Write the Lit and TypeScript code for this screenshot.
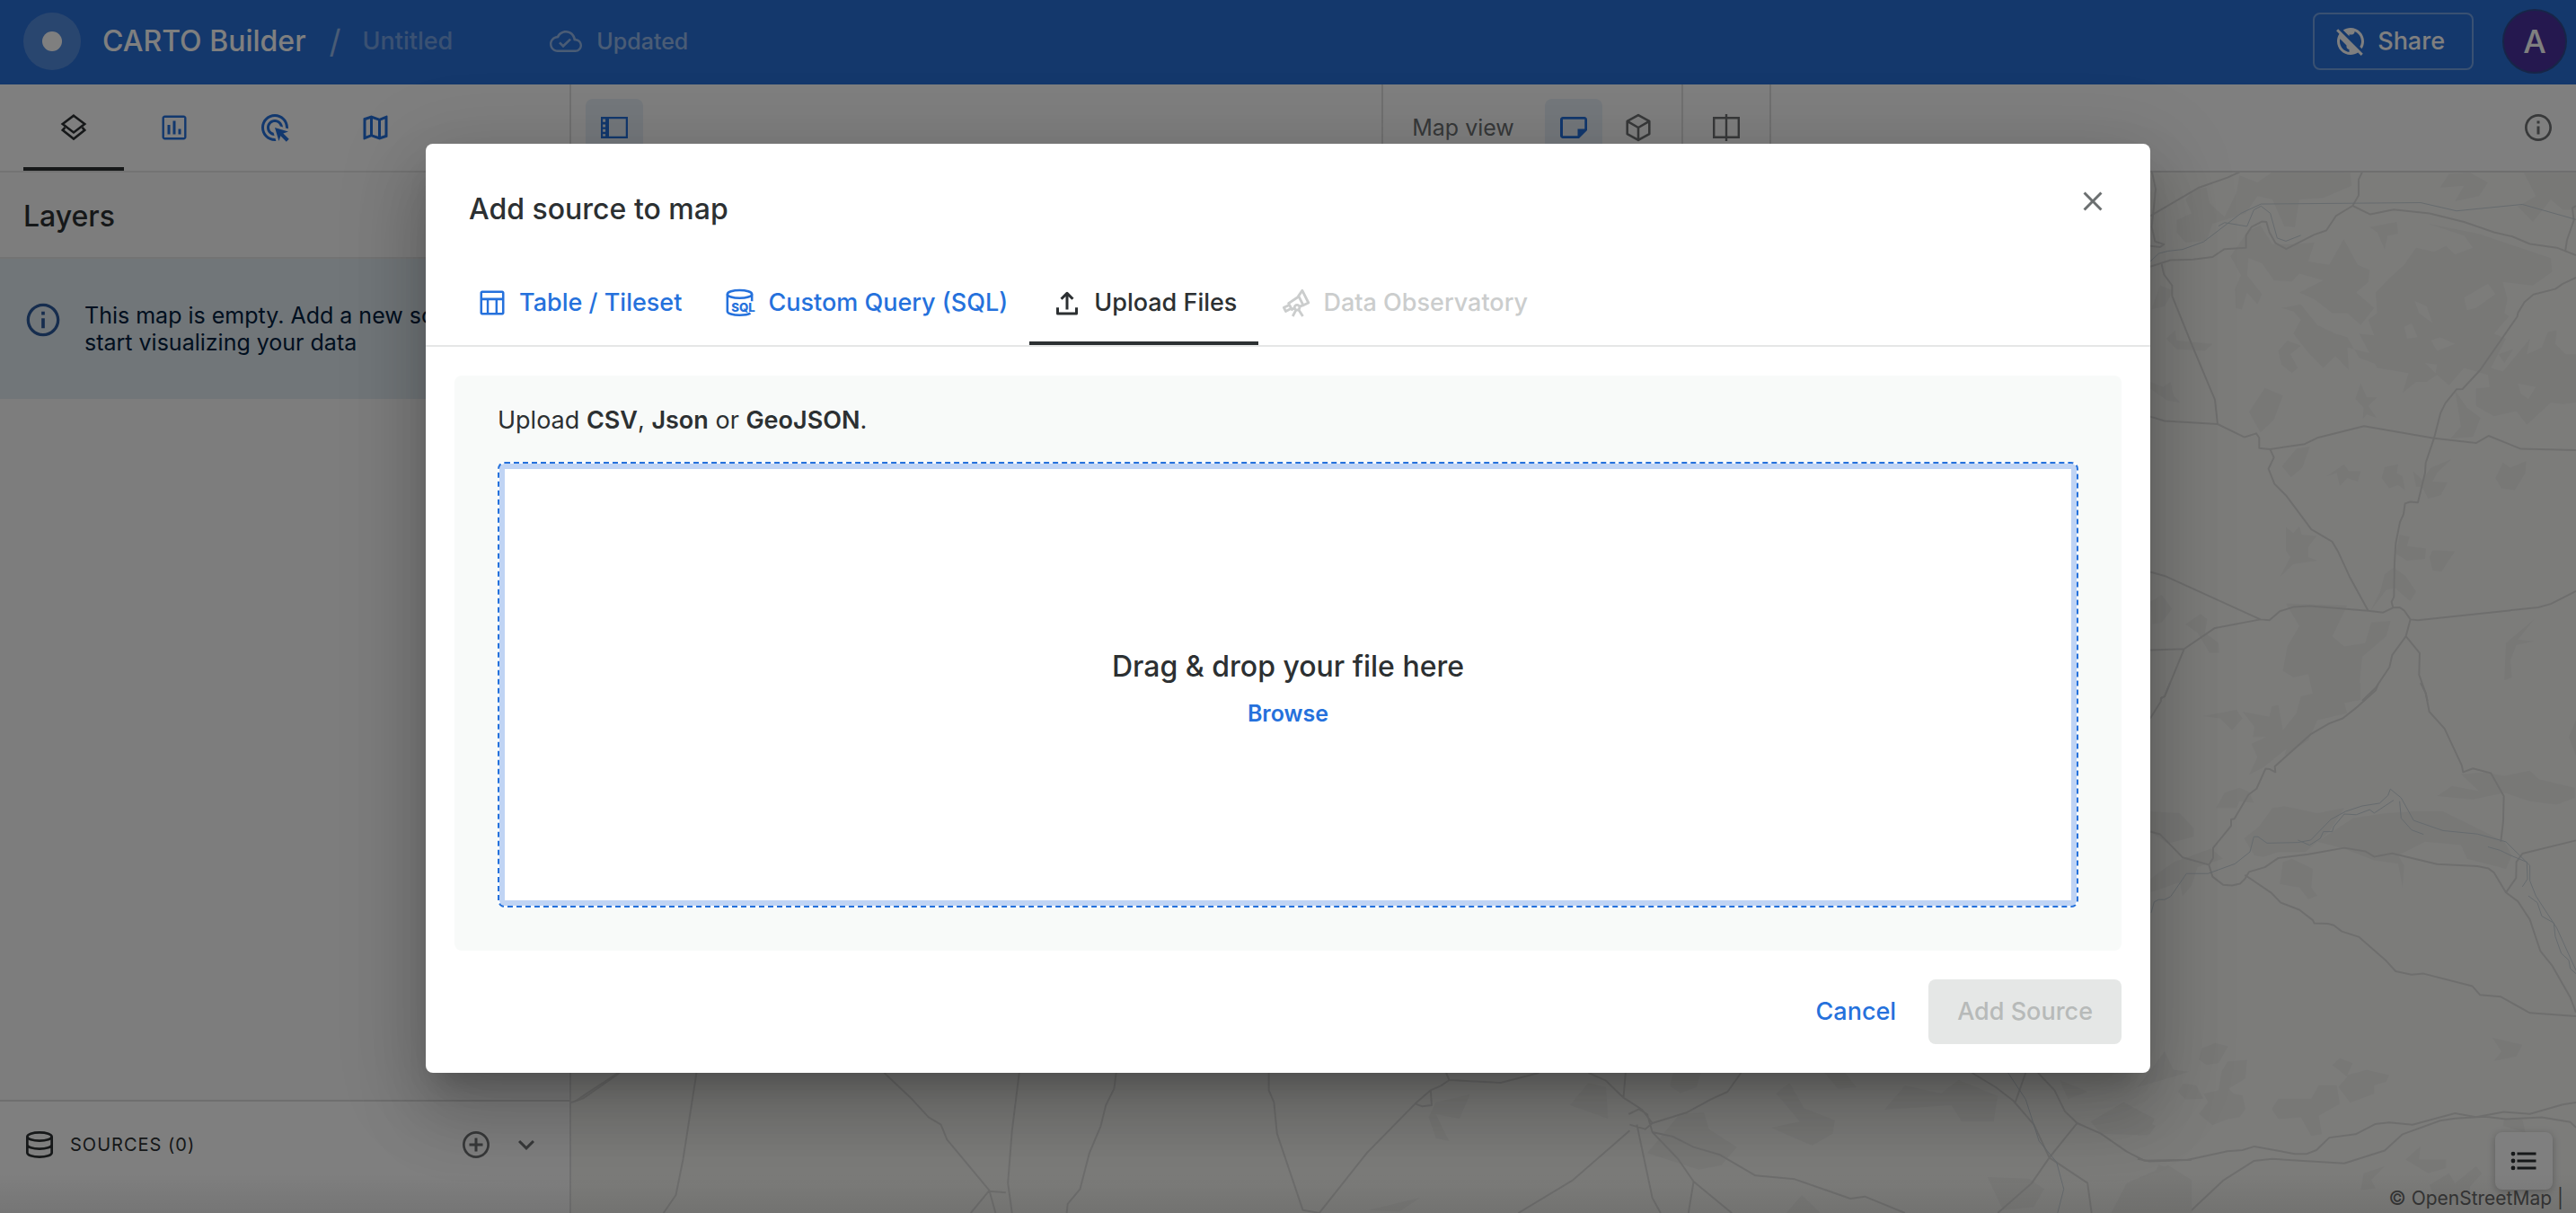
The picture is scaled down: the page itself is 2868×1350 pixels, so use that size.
import { LitElement, html, svg, css, nothing } from "lit";
import { customElement, property, state } from "lit/decorators.js";
import { classMap } from "lit/directives/class-map.js";

const icons: Record<string, unknown> = {
  layers: svg`<g fill="none" stroke="currentColor" stroke-width="1.7"><path d="M12 3.1 20.2 9.3 12 15.6 3.8 9.3Z"/><path d="M5.6 11.9 3.8 13.9 12 20.4 20.2 13.9 18.4 11.9"/></g>`,
  chart: svg`<path fill="currentColor" fill-rule="evenodd" d="M5 3h14c1.1 0 2 .9 2 2v14c0 1.1-.9 2-2 2H5c-1.1 0-2-.9-2-2V5c0-1.1.9-2 2-2zm-.4 1.6v14.8h14.8V4.600zM7 10h2v7H7zm4-3h2v10h-2zm4 6h2v4h-2z"/>`,
  target: svg`<path fill="currentColor" d="M11.71 17.99C8.530 17.84 6 15.22 6 12c0-3.310 2.690-6 6-6 3.220 0 5.840 2.530 5.990 5.710l-2.100-.630C15.480 9.310 13.890 8 12 8c-2.210 0-4 1.790-4 4 0 1.890 1.310 3.480 3.080 3.890l.630 2.100zM22 12c0 .3-.01.6-.04.9l-1.970-.590C20 12.210 20 12.100 20 12c0-4.420-3.580-8-8-8s-8 3.580-8 8 3.580 8 8 8c.1 0 .21 0 .31-.01l.590 1.970C12.600 21.990 12.300 22 12 22 6.480 22 2 17.520 2 12S6.480 2 12 2s10 4.480 10 10zm-3.770 4.260L22 15l-10-3 3 10 1.260-3.770 4.270 4.270 1.980-1.980-4.280-4.260z"/>`,
  map: svg`<path fill="currentColor" d="M20.5 3l-.16.03L15 5.1 9 3 3.360 4.900c-.21.07-.36.25-.36.48V20.500c0 .28.22.5.5.5l.16-.03L9 18.900l6 2.100 5.640-1.900c.21-.07.36-.25.36-.48V3.500c0-.28-.22-.5-.5-.5zM10 5.470l4 1.400v11.660l-4-1.400V5.470zm-5 .99l3-1.010v11.700l-3 1.160V6.460zm14 11.080l-3 1.010V6.860l3-1.160v11.840z"/>`,
  panel: svg`<path fill="currentColor" fill-rule="evenodd" d="M2 4h20v16H2zM3.400 5.600v2.200h2V5.600zm0 4v2h2v-2zm0 3.600v2h2v-2zm0 3.600v1.600h2v-1.600zM8 5.500v13h12.500v-13z"/>`,
  note: svg`<path fill="currentColor" fill-rule="evenodd" d="M4 4h16c1.100 0 2 .9 2 2v8l-6 6H4c-1.100 0-2-.9-2-2V6c0-1.100.9-2 2-2zm0 1.800v12.400h11V13h5.200V5.800z"/>`,
  cube: svg`<path fill="none" stroke="currentColor" stroke-width="1.700" stroke-linejoin="round" d="M12 2.700 20.200 7.300V16.700L12 21.300 3.800 16.700V7.300ZM3.800 7.300 12 12 20.200 7.300M12 12V21.300"/>`,
  split: svg`<path fill="none" stroke="currentColor" stroke-width="1.600" d="M2.800 4.800H21.200V19.200H2.800ZM12 2V22"/>`,
  info: svg`<path fill="currentColor" d="M11 7h2v2h-2zm0 4h2v6h-2zm1-9C6.480 2 2 6.480 2 12s4.480 10 10 10 10-4.480 10-10S17.520 2 12 2zm0 18.200c-4.500 0-8.200-3.700-8.200-8.200S7.500 3.800 12 3.800s8.200 3.700 8.200 8.200-3.700 8.200-8.200 8.200z"/>`,
  cloud: svg`<path fill="currentColor" d="M19.350 10.040C18.670 6.590 15.640 4 12 4 9.110 4 6.600 5.640 5.350 8.040 2.340 8.360 0 10.910 0 14c0 3.310 2.690 6 6 6h13c2.760 0 5-2.240 5-5 0-2.640-2.050-4.780-4.650-4.960zM19 18.400H6c-2.400 0-4.400-2-4.400-4.400 0-2.250 1.730-4.160 3.960-4.370l1.070-.11.5-.95C8.080 6.740 9.940 5.600 12 5.600c2.820 0 4.980 2.060 5.490 4.630l.3 1.300 1.430.11c1.760.1 3.180 1.600 3.180 3.360 0 1.850-1.550 3.400-3.400 3.400zm-9-4.020l-2.090-2.090-1.210 1.210L10 16.800l6.010-5.810-1.210-1.210z"/>`,
  publicOff: svg`<path fill="currentColor" d="M11 8.170L6.490 3.660C8.070 2.610 9.960 2 12 2c5.520 0 10 4.480 10 10 0 2.040-.61 3.930-1.660 5.510l-1.460-1.460C19.590 14.870 20 13.480 20 12c0-3.350-2.070-6.220-5-7.410V5c0 1.100-.9 2-2 2h-2v1.170zm10.190 13.020l-1.410 1.410-2.270-2.270C15.930 21.390 14.040 22 12 22 6.480 22 2 17.520 2 12c0-2.040.61-3.930 1.660-5.510L1.390 4.220 2.800 2.810l18.390 18.380zM11 18c-1.100 0-2-.9-2-2v-1l-4.790-4.790C4.080 10.790 4 11.380 4 12c0 4.080 3.050 7.440 7 7.930V18z"/>`,
  database: svg`<g fill="none" stroke="currentColor" stroke-width="1.800"><ellipse cx="12" cy="6" rx="9.100" ry="3.100"/><path d="M2.900 6V18C2.900 19.700 6.900 21.100 12 21.100S21.100 19.700 21.100 18V6M2.900 12C2.900 13.700 6.900 15.100 12 15.100S21.100 13.700 21.100 12"/></g>`,
  add: svg`<path fill="currentColor" d="M13 7h-2v4H7v2h4v4h2v-4h4v-2h-4V7zm-1-5C6.480 2 2 6.480 2 12s4.480 10 10 10 10-4.480 10-10S17.520 2 12 2zm0 18.200c-4.500 0-8.200-3.700-8.200-8.200S7.500 3.800 12 3.800s8.200 3.700 8.200 8.200-3.700 8.200-8.200 8.200z"/>`,
  chevron: svg`<path fill="currentColor" d="M7.410 8.590L12 13.170l4.590-4.580L18 10l-6 6-6-6 1.410-1.410z"/>`,
  list: svg`<g fill="currentColor"><circle cx="4" cy="6.700" r="1.600"/><circle cx="4" cy="12" r="1.600"/><circle cx="4" cy="17.300" r="1.600"/><path d="M7 5.700h14v2H7zM7 11h14v2H7zM7 16.300h14v2H7z"/></g>`,
  close: svg`<path fill="currentColor" d="M19 6.410L17.590 5 12 10.590 6.410 5 5 6.410 10.590 12 5 17.590 6.410 19 12 13.410 17.590 19 19 17.590 13.410 12z"/>`,
  table: svg`<path fill="currentColor" fill-rule="evenodd" d="M4.500 3h15c.8 0 1.500.7 1.500 1.500v15c0 .8-.7 1.500-1.500 1.500h-15C3.700 21 3 20.300 3 19.500v-15C3 3.700 3.700 3 4.500 3zm.2 1.600V8.300h14.600V4.600zm0 5.600v9.200h3.200v-9.200zm4.800 0v9.200h4.900v-9.200zm6.500 0v9.200h3.300v-9.200z"/>`,
  sql: svg`<g fill="none" stroke="currentColor" stroke-width="1.700"><ellipse cx="11" cy="5.600" rx="9.100" ry="2.900"/><path d="M1.900 5.600V18.300C1.900 19.900 6 21.200 11 21.200 14.400 21.200 17.400 20.700 19 19.800M20.100 5.600V10.800"/></g><text x="4.800" y="18.400" font-family="Inter, sans-serif" font-size="8.800" font-weight="800" fill="currentColor">SQL</text>`,
  upload: svg`<path fill="none" stroke="currentColor" stroke-width="2" stroke-linejoin="round" d="M12 17V5M7.700 9.200 12 4.900 16.300 9.200M5 15.500V20H19V15.500"/>`,
  telescope: svg`<g fill="none" stroke="currentColor" stroke-width="1.900" stroke-linejoin="round"><path d="M16.600 2.900 21.200 12 17.300 13.800 13.800 6.900Z"/><path d="M14 7.300 6.400 12.400 8.900 17 11 15.900M14.600 14.700 17.300 13.700M6.600 13.800 2.900 15.500 4.300 18.300 8.100 16.300"/><circle cx="12.700" cy="15.500" r="1.900"/><path d="M12 17.300 9.500 22M14 17.300 17 22"/></g>`,
};

@customElement("ui-icon")
export class UiIcon extends LitElement {
  @property() name = "info";

  static styles = css`
    :host {
      display: inline-flex;
      flex: none;
      width: 36px;
      height: 36px;
    }
    svg {
      width: 100%;
      height: 100%;
      display: block;
    }
  `;

  render() {
    return html`<svg viewBox="0 0 24 24" aria-hidden="true">${icons[this.name] ?? nothing}</svg>`;
  }
}

@customElement("base-map")
export class BaseMap extends LitElement {
  static styles = css`
    :host {
      display: block;
      overflow: hidden;
      background: #f8f8f5;
    }
    svg {
      display: block;
      width: 100%;
      height: 100%;
    }
    path {
      vector-effect: non-scaling-stroke;
    }
    .wood {
      fill: #f0f0ed;
    }
    .roads {
      fill: none;
      stroke: #dddddb;
      stroke-width: 2;
      stroke-linejoin: round;
    }
    .river {
      fill: none;
      stroke: #ccd6dc;
      stroke-width: 1;
      stroke-linejoin: round;
    }
  `;

  private north() {
    return svg`<g transform="translate(2380 180) scale(0.3333 0.3827)">
      <g class="wood">
        <path d="M190 80 230 75 240 120 290 160 330 90 340 40 400 60 450 30 710 32 715 70 620 105 540 110 525 190 490 188 450 110 400 100 360 150 250 180 230 230 160 235 130 205 130 170 180 150 160 110Z"/>
        <path d="M310 275 370 200 410 185 450 240 520 240 590 235 570 290 640 300 688 225 735 300 775 315 770 350 730 380 790 425 745 475 700 440 650 440 590 400 540 380 620 345 540 325 515 348 455 345 415 295 370 280 365 330 415 385 400 415 365 380 348 430 328 425 325 370 345 330Z"/>
        <path fill-rule="evenodd" d="M890 300 930 250 990 262 1030 245 1060 270 1120 250 1090 215 970 180 1140 210 1380 280 1385 320 1320 360 1220 350 1235 400 1225 440 1240 450 1190 500 1230 515 1180 600 1220 610 1310 515 1300 560 1350 540 1370 495 1400 490 1395 530 1430 560 1464 560V700L1420 705 1380 700 1300 765 1265 725 1190 740 1130 710 1130 660 1175 655 1170 620 1090 600 1040 650 1000 620 965 640 930 640 885 672 905 615 800 600 740 500 790 505 770 460 800 440 795 380 840 340ZM1090 395 1170 355 1195 385 1130 425 1100 432ZM925 405 965 420 985 470 940 440ZM890 480 915 470 935 510 900 515ZM980 520 1010 510 1060 530 1000 550ZM960 585 1000 590 995 615ZM1205 560 1255 545 1225 585ZM1270 645 1330 655 1305 690 1280 675Z"/>
        <path d="M480 425 545 415 600 475 660 500 700 510 740 570 800 590 870 590 790 560 700 540 705 605 660 565 620 600 570 555 520 500 545 460 520 435ZM470 550 500 520 545 535 510 560 535 600 515 615 480 590Z"/>
        <path d="M425 658 485 680 455 750 410 788 372 728ZM745 645 765 685 800 685 770 710 798 745 765 735 752 748 755 715 727 690ZM575 828 550 890 512 918 482 885 530 835ZM630 915 690 880 705 900 745 900 735 930 700 920 675 943 665 905ZM870 880 865 905 885 915 893 955 870 940 840 950 815 920 825 888ZM920 900 950 925 980 890 1048 865 1000 905 985 930 1035 933 1012 970 970 980 950 945 930 945ZM1298 870 1295 905 1260 955 1215 950 1195 920 1220 875 1245 890Z"/>
        <path d="M495 1062 520 1080 540 1060 548 1085 598 1088 570 1120 570 1150 600 1160 520 1170 475 1208 510 1150 495 1130ZM875 1085 908 1090 900 1118 963 1125 960 1155 900 1160 862 1140ZM985 1130 1060 1133 1035 1165 1015 1192 985 1188 975 1150ZM825 1200 855 1180 895 1205 930 1250 910 1278 860 1240 830 1245 775 1310 810 1250ZM495 1285 700 1290 650 1380 690 1410 760 1400 780 1340 845 1335 830 1380 750 1440 735 1568H590L570 1490 520 1500 485 1480 500 1410 540 1350Z"/>
        <path d="M95 515 125 490 130 520 250 530 225 550 130 545ZM42 640 85 655 110 640 120 680 142 700 100 695 42 660ZM42 1280 80 1260 115 1300 80 1340 50 1345ZM160 1345 210 1315 232 1330 225 1370 270 1400 272 1428 240 1428 200 1370ZM1325 1330 1270 1390 1325 1395 1265 1405 1245 1450 1250 1500 1225 1508 1230 1400ZM775 190 865 175 870 210 835 215 825 255 800 205ZM1110 32 1170 60 1140 100 1060 115 1090 70 1010 75 1040 35ZM1290 32 1464 32V140L1420 140 1380 110 1320 175 1270 130 1330 100ZM1060 665 1100 715 1145 745 1120 800 1045 805 1080 770ZM75 360 120 375 90 420 45 430Z"/>
      </g>
      <g class="roads">
        <path d="M48 30 60 80 47 190 58 232 88 240 75 248 42 245M42 158 205 75 300 46 340 30M750 30 738 52 738 98 718 128 777 153 855 139 975 150 1090 175 1190 205 1250 217 1310 239 1400 250 1464 272M718 128 662 158 630 200 590 212 496 254 460 236 440 205 430 175 415 174 380 190 362 214 362 250 290 254 250 277 185 284 110 286 42 305"/>
        <path d="M80 298 88 328 115 360 115 390 180 530 258 692 267 763 357 801 396 790 406 803 406 833 442 836 558 821 600 803 756 769 990 804 1130 818 1172 797 1280 835 1464 839M42 741 90 754 267 763M442 836 455 860 437 893 457 937 495 970 580 1069 650 1105 670 1135 708 1207 770 1306"/>
        <path d="M1464 337 1420 355 1395 370 1322 386 1292 408 1270 440 1268 450 1143 607 1085 661 1065 662 1028 702 1012 730 990 804 962 876 960 905 936 991 910 989 893 994 888 1025 876 1048 862 1110 858 1165 856 1265 848 1280 853 1297"/>
        <path d="M42 1193 95 1206 410 1331M42 1420 155 1417 258 1356 410 1331 440 1333 475 1307 520 1295 575 1292 770 1306 820 1311 853 1297 875 1296 890 1305 911 1331 936 1333 1338 1296 1380 1286 1464 1249M155 1417 90 1555 78 1560 77 1568M911 1331 896 1380 942 1429 940 1492 962 1545 968 1568M896 1380 850 1435 841 1470 795 1530 750 1568M1464 128 1452 135 1457 170 1434 228 1428 262"/>
      </g>
      <path class="river" d="M42 290 70 267 100 260 150 255 220 233 345 150 412 123 945 119 1065 143 1285 124 1464 168M270 187 290 177 365 188 388 140 412 129 443 150 466 222 495 231 545 214"/>
    </g>`;
  }

  private east() {
    return svg`<g transform="translate(2380 760) scale(0.3333 0.3763)">
      <g class="wood">
        <path d="M580 0H745L745 50 690 60 700 90 600 110 570 170 490 215 497 195 420 250 372 272 400 220 380 180 430 160 385 160 390 130 350 85 440 100 448 70 470 65 485 140 530 90 545 40 595 30ZM218 98 330 80 350 105 315 140 275 105Z"/>
        <path d="M42 380 140 385 187 430 187 455 100 475 42 440ZM262 370 290 325 340 310 372 322 388 355 340 350 330 370ZM42 580 120 530 245 490 285 520 200 545 180 600 150 630 140 590 42 620ZM355 460 405 425 450 370 490 365 600 385 690 370 640 440 560 500 470 500 420 515 390 510Z"/>
        <path d="M600 470 720 400 830 385 920 380 1020 380 1225 470 1250 510 1230 550 1100 520 1080 480 960 470 870 510 890 540 885 605 870 535 790 525 690 490ZM485 530 515 520 585 550 580 605 600 630 570 640 540 605 475 595ZM1000 335 1050 305 1140 320 1080 270 1160 265 1225 275 1310 260 1340 285 1460 310V340L1400 360 1310 350 1225 325 1120 345ZM1440 160 1464 110V215Z"/>
        <path d="M205 1115 215 1080 260 1065 302 1075 270 1125 230 1130ZM300 1120 365 1115 360 1170 305 1200 320 1215 350 1220 360 1260 340 1285 300 1290 250 1308 205 1275 235 1240 220 1215 270 1205 280 1150ZM135 1210 150 1185 195 1190 220 1230 160 1232ZM90 1090 120 1145 172 1150 100 1170 0 1195ZM650 1130 675 1110 718 1125 700 1160 765 1145 840 1160 830 1180 790 1190 790 1215 710 1242 670 1195 700 1165ZM605 1190 665 1190 675 1245 605 1280 615 1335 580 1340 545 1285 470 1290 448 1260 470 1230 580 1230Z"/>
        <path d="M1185 1050 1285 1070 1265 1105 1190 1118 1215 1090ZM895 1410 945 1370 940 1410 1030 1410 1030 1435 970 1450ZM745 1500 755 1450 825 1430 780 1470 795 1495ZM975 1485 1040 1450 1060 1480 1130 1430 1150 1450 1110 1490 1110 1540 990 1520ZM45 1470 70 1425 118 1440 80 1490ZM95 1510 150 1470 155 1530 110 1560ZM0 1285 60 1310 40 1335 0 1340ZM1225 1290H1285L1295 1330 1220 1310Z"/>
      </g>
      <g class="roads">
        <path d="M108 0 90 40 78 45 77 55 42 105M805 0 795 22 735 70 685 105 640 120 578 152 458 247 460 264 440 255 427 254 397 313 370 331 323 402 312 404 312 423 252 488 252 518 238 538 150 516 75 448 42 440M238 538 250 573 285 597 315 599 342 594 358 580 372 559 425 545 470 518 570 507 690 488 760 498 790 514 850 504 1000 536 1135 542 1172 549 1190 561 1230 620 1270 646 1310 700 1345 793 1385 837 1445 930 1464 975"/>
        <path d="M358 568 445 620 478 650 540 671 585 702 590 711 635 712 655 717 682 735 738 751 830 822 862 853 915 863 955 860 1118 897 1144 923 1212 928 1310 976 1464 986M945 0 962 30 974 85 1025 135 1083 245 1087 264 1120 253 1180 267 1223 335 1221 410 1213 470M1464 466 1285 505 1265 530 1264 577 1230 620"/>
        <path d="M0 1408 40 1415 165 1411 300 1385 350 1382 390 1371 525 1393 565 1393 597 1382 640 1345 728 1335 793 1305 840 1300 918 1307 1060 1273 1130 1284 1223 1269 1310 1275 1420 1247 1464 1241M170 1568 285 1472 388 1414 450 1408 690 1421 825 1383 885 1335 1010 1295 1060 1288 1160 1283 1230 1290 1350 1285 1445 1299 1464 1315"/>
      </g>
      <path class="river" d="M45 680 55 648 70 641 90 641 110 632 163 564 235 564 325 535 375 500 388 455 402 455 432 474 535 472 578 465 645 404 695 380 750 364 808 356 836 333 844 314 880 340 922 407 1020 437 1135 447 1230 470 1310 540 1310 585 1330 630 1400 725 1464 850M535 465 574 480 610 460 620 440 650 440 655 425 690 388 730 390 775 375 790 385 855 347M875 350 880 400 915 435 955 448M1170 485 1210 495 1245 510 1300 530 1302 580 1285 603M1305 630 1335 650 1350 690 1390 710 1395 750 1415 800 1440 820 1445 845 1464 860"/>
    </g>`;
  }

  private south() {
    return svg`<g transform="translate(640 1180) scale(1.148 0.3333)">
      <g class="wood">
        <path d="M983 75 1000 90 1002 195 965 150ZM1065 42H1092L1088 90 1072 110 1062 85ZM1072 178 1095 175 1100 230 1127 290 1112 350 1090 365 1040 310ZM1165 110 1178 75 1192 160 1222 200 1220 245 1200 285 1160 225 1188 205ZM1212 42H1232L1243 90 1225 95ZM1270 165 1290 85 1325 110 1342 65 1380 120 1376 205 1345 205 1335 150ZM1440 65 1467 105 1448 130ZM1470 205 1502 140 1532 195 1525 250 1480 245ZM835 140 868 115 858 195 835 180 848 270 835 260 828 190ZM1370 390 1410 395 1425 430 1415 490 1385 500ZM1505 410 1545 350 1568 400V510H1490ZM1190 450 1208 510H1175ZM770 500 820 458 800 505Z"/>
      </g>
      <g class="roads">
        <path d="M42 42 12 110 0 138M118 42 105 330 98 450 86 510M300 42 327 130 343 190 355 215 361 265 402 435 384 510M402 435 408 510M402 437 418 442M431 42 424 235 420 410 424 510M525 42 523 95 515 150 510 220 499 310 490 430 478 480 477 510M673 42 673 100 678 140 681 245 706 500 722 510 768 310 815 145 830 100 840 85 848 66 898 75 935 42M845 42 848 66M815 145 822 154 831 150 830 100"/>
        <path d="M983 42 1000 68 1017 125 1035 165 1045 210 1078 175 1102 130 1118 105 1131 42M1019 42 1017 125M1022 180 1032 163 1040 180 1045 240 1065 255 1085 290 1110 315 1145 385 1183 397 1237 462 1251 455 1290 510M1023 215 1038 230 1045 210M1023 235 968 400 915 510M1030 215 1045 460 1053 510M1045 240 1070 330 1085 405 1080 510M1085 405 1122 510"/>
        <path d="M1355 42 1378 90 1395 135 1415 215 1430 325 1467 410 1471 510M1407 42 1397 140M1419 42 1435 100 1445 170 1457 210 1480 245 1505 305 1522 335 1568 332M1457 210 1430 325 1413 410 1380 510"/>
      </g>
      <path class="river" d="M1390 42 1407 130 1420 270 1437 340 1444 430 1438 510"/>
    </g>
    <g class="roads"><path d="M636 1227 650 1222 690 1194"/></g>`;
  }

  render() {
    return html`<svg viewBox="636 192 2232 1158" preserveAspectRatio="xMaxYMin slice" aria-hidden="true">
      ${this.north()}${this.east()}${this.south()}
    </svg>`;
  }
}

interface SourceTab {
  id: string;
  label: string;
  icon: string;
  disabled?: boolean;
}

@customElement("source-dialog")
export class SourceDialog extends LitElement {
  @state() private active = "upload";

  private tabs: SourceTab[] = [
    { id: "table", label: "Table / Tileset", icon: "table" },
    { id: "query", label: "Custom Query (SQL)", icon: "sql" },
    { id: "upload", label: "Upload Files", icon: "upload" },
    { id: "observatory", label: "Data Observatory", icon: "telescope", disabled: true },
  ];

  static styles = css`
    :host {
      display: block;
      box-sizing: border-box;
      width: 100%;
      max-width: 1920px;
      background: #fff;
      border-radius: 8px;
      color: #2c3032;
      box-shadow: 0 22px 30px -14px rgba(0, 0, 0, 0.2), 0 48px 76px 6px rgba(0, 0, 0, 0.14),
        0 18px 92px 16px rgba(0, 0, 0, 0.12);
    }
    button {
      font: inherit;
      border: 0;
      background: none;
      padding: 0;
      color: inherit;
      cursor: pointer;
    }
    .head {
      display: flex;
      justify-content: space-between;
      padding: 40px 40px 0 48px;
      height: 90px;
    }
    h2 {
      margin: 13px 0 0;
      font-size: 32px;
      line-height: 40px;
      font-weight: 500;
    }
    .close {
      display: flex;
      align-items: center;
      justify-content: center;
      width: 48px;
      height: 48px;
      color: #6b6f70;
    }
    .tabs {
      display: flex;
      padding: 0 32px;
      border-bottom: 2px solid #e6e7e7;
    }
    .tab {
      display: flex;
      align-items: center;
      gap: 12px;
      padding: 0 24px;
      height: 94px;
      box-sizing: border-box;
      border-top: 4px solid transparent;
      border-bottom: 4px solid transparent;
      color: #2571dc;
      font-size: 27px;
      line-height: 40px;
      font-weight: 500;
      white-space: nowrap;
    }
    .tab.active {
      color: #2c3032;
      border-bottom-color: #2c3032;
    }
    .tab:disabled {
      color: #cbcdcd;
      cursor: default;
    }
    .panel {
      margin: 32px;
      padding: 30px 48px 48px;
      background: #f8faf9;
      border-radius: 8px;
    }
    .hint {
      margin: 0 0 26px;
      font-size: 27px;
      line-height: 40px;
    }
    b {
      font-weight: 600;
    }
    .drop {
      display: flex;
      flex-direction: column;
      align-items: center;
      justify-content: center;
      gap: 12px;
      box-sizing: border-box;
      min-height: 496px;
      padding-top: 12px;
      border: 2px dashed #2571dc;
      border-radius: 8px;
      background: #fff;
      box-shadow: inset 0 0 0 6px #c0d4f4;
    }
    .drop p {
      margin: 0;
      font-size: 32px;
      line-height: 40px;
      font-weight: 500;
    }
    .browse {
      font-size: 25px;
      line-height: 40px;
      font-weight: 600;
      color: #2571dc;
    }
    .actions {
      display: flex;
      justify-content: flex-end;
      gap: 4px;
      padding: 0 32px 32px;
      font-size: 27px;
      font-weight: 500;
    }
    .actions button {
      height: 72px;
      padding: 0 32px;
      border-radius: 8px;
      line-height: 40px;
    }
    .actions .cancel {
      color: #2571dc;
    }
    .actions .add {
      background: #e5e7e6;
      color: #b7bab9;
    }
  `;

  render() {
    return html`
      <div class="head">
        <h2>Add source to map</h2>
        <button class="close" aria-label="Close"><ui-icon name="close"></ui-icon></button>
      </div>
      <div class="tabs" role="tablist">
        ${this.tabs.map(
          (t) => html`<button
            role="tab"
            class=${classMap({ tab: true, active: t.id === this.active })}
            aria-selected=${t.id === this.active ? "true" : "false"}
            ?disabled=${t.disabled}
            @click=${() => (this.active = t.id)}
          ><ui-icon name=${t.icon}></ui-icon><span>${t.label}</span></button>`
        )}
      </div>
      <div class="panel" role="tabpanel">
        <p class="hint">Upload <b>CSV</b>, <b>Json</b> or <b>GeoJSON</b>.</p>
        <div class="drop">
          <p>Drag &amp; drop your file here</p>
          <button class="browse">Browse</button>
        </div>
      </div>
      <div class="actions">
        <button class="cancel">Cancel</button>
        <button class="add" disabled>Add Source</button>
      </div>
    `;
  }
}

@customElement("app-root")
export class AppRoot extends LitElement {
  static styles = css`
    :host {
      display: grid;
      position: relative;
      grid-template-rows: 94px 1fr;
      min-height: 100vh;
      overflow: hidden;
      background: #fff;
      font-family: Inter, "Liberation Sans", sans-serif;
      font-size: 27px;
      line-height: 40px;
      color: #2c3032;
    }
    button {
      font: inherit;
      color: inherit;
      border: 0;
      padding: 0;
      background: none;
      cursor: pointer;
    }
    a {
      color: inherit;
      text-decoration: none;
    }
    .top {
      display: flex;
      align-items: center;
      padding: 0 10px 2px 26px;
      background: #2970d8;
      color: #fff;
    }
    .logo {
      display: grid;
      place-items: center;
      width: 64px;
      height: 64px;
      border-radius: 50%;
      background: rgba(255, 255, 255, 0.2);
    }
    .logo i {
      width: 22px;
      height: 22px;
      border-radius: 50%;
      background: #fff;
    }
    .top h1 {
      margin: 0 26px 0 24px;
      font-size: 32px;
      line-height: 40px;
      font-weight: 500;
    }
    .slash {
      font-size: 36px;
      opacity: 0.5;
    }
    .name {
      margin-left: 24px;
      font-weight: 500;
      opacity: 0.35;
    }
    .status {
      display: flex;
      align-items: center;
      gap: 16px;
      margin-left: 108px;
      font-size: 25px;
      font-weight: 500;
      opacity: 0.5;
    }
    .share {
      display: flex;
      align-items: center;
      gap: 12px;
      box-sizing: border-box;
      height: 64px;
      padding: 0 30px 0 22px;
      margin-left: auto;
      border: 2px solid rgba(255, 255, 255, 0.35);
      border-radius: 8px;
      font-weight: 500;
    }
    .avatar {
      box-sizing: border-box;
      width: 72px;
      height: 72px;
      margin-left: 32px;
      border: 2px solid #2f4a90;
      border-radius: 50%;
      background: #4a309f;
      font-size: 36px;
      font-weight: 500;
    }
    .body {
      display: grid;
      grid-template-columns: 636px 1fr;
      min-height: 0;
    }
    .side {
      display: flex;
      flex-direction: column;
      border-right: 2px solid #e0e0e0;
      background: #fafafa;
    }
    .side-tabs {
      display: flex;
      padding: 0 26px;
      background: #fff;
      border-bottom: 2px solid #e6e6e6;
    }
    .side-tab {
      display: flex;
      align-items: center;
      justify-content: center;
      width: 112px;
      height: 96px;
      box-sizing: border-box;
      border-top: 4px solid transparent;
      border-bottom: 4px solid transparent;
      color: #2571dc;
    }
    .side-tab.active {
      color: #2c3032;
      border-bottom-color: #2c3032;
    }
    .side h2 {
      margin: 0;
      padding: 29px 26px 25px;
      font-size: 32px;
      line-height: 40px;
      font-weight: 500;
      border-bottom: 2px solid #e6e6e6;
    }
    .notice {
      display: flex;
      gap: 24px;
      padding: 46px 60px 46px 26px;
      background: #e3ecf2;
      color: #00203e;
    }
    .notice ui-icon {
      width: 44px;
      height: 44px;
      color: #2d5a9c;
    }
    .notice p {
      margin: 2px 0;
      font-size: 25px;
      line-height: 30px;
    }
    .sources {
      display: flex;
      align-items: center;
      margin-top: auto;
      padding: 0 30px 28px 26px;
      height: 126px;
      box-sizing: border-box;
      border-top: 2px solid #dedede;
      background: #fff;
    }
    .sources span {
      margin: 0 auto 0 16px;
      font-size: 20px;
      letter-spacing: 1px;
    }
    .sources button {
      display: flex;
      margin-left: 20px;
      color: #707374;
    }
    .stage {
      display: grid;
      grid-template-rows: 98px 1fr;
      min-width: 0;
    }
    .bar {
      display: flex;
      align-items: stretch;
      justify-content: space-between;
      border-bottom: 2px solid #dedede;
      color: #6f7374;
    }
    .group {
      display: flex;
      align-items: center;
      gap: 8px;
      padding: 0 16px;
      box-sizing: border-box;
    }
    .group.end {
      padding-right: 10px;
    }
    .modes {
      display: flex;
      margin: 0 auto;
      border-left: 2px solid #e0e0e0;
    }
    .modes .group {
      border-right: 2px solid #e0e0e0;
    }
    .label {
      margin: 0 26px 0 16px;
      font-size: 25px;
    }
    .tool {
      display: grid;
      place-items: center;
      width: 64px;
      height: 64px;
      border-radius: 8px;
      color: #707374;
    }
    .tool.on {
      background: #e9f0f8;
      color: #2571dc;
    }
    .map-area {
      position: relative;
      display: grid;
      min-height: 0;
    }
    .map-tools {
      position: absolute;
      right: 14px;
      bottom: 0;
      display: flex;
      flex-direction: column;
      align-items: flex-end;
      font-size: 21px;
      line-height: 32px;
      color: #6b6b6b;
    }
    .legend {
      display: grid;
      place-items: center;
      width: 64px;
      height: 64px;
      margin: 0 12px -6px 0;
      border-radius: 8px;
      background: #fff;
      color: #2c3032;
      box-shadow: 0 2px 8px rgba(0, 0, 0, 0.25);
    }
    base-map {
      position: absolute;
      inset: 0;
    }
    .backdrop {
      position: absolute;
      inset: 0;
      display: grid;
      place-items: center;
      padding: 4px 64px 0;
      background: linear-gradient(to top, rgba(0, 0, 0, 0.08), transparent 44px), rgba(0, 0, 0, 0.5);
    }
  `;

  private sideTabs = [
    { icon: "layers", label: "Layers" },
    { icon: "chart", label: "Widgets" },
    { icon: "target", label: "Interactions" },
    { icon: "map", label: "Basemaps" },
  ];

  render() {
    return html`
      <header class="top">
        <div class="logo"><i></i></div>
        <h1>CARTO Builder</h1>
        <span class="slash">/</span>
        <span class="name">Untitled</span>
        <span class="status"><ui-icon name="cloud"></ui-icon>Updated</span>
        <button class="share"><ui-icon name="publicOff"></ui-icon>Share</button>
        <button class="avatar">A</button>
      </header>
      <div class="body">
        <aside class="side">
          <nav class="side-tabs">
            ${this.sideTabs.map(
              (t, i) => html`<button class=${classMap({ "side-tab": true, active: i === 0 })} aria-label=${t.label}>
                <ui-icon name=${t.icon}></ui-icon>
              </button>`
            )}
          </nav>
          <h2>Layers</h2>
          <div class="notice">
            <ui-icon name="info"></ui-icon>
            <p>This map is empty. Add a new source to start visualizing your data</p>
          </div>
          <div class="sources">
            <ui-icon name="database"></ui-icon>
            <span>SOURCES (0)</span>
            <button aria-label="Add source"><ui-icon name="add"></ui-icon></button>
            <button aria-label="Expand sources"><ui-icon name="chevron"></ui-icon></button>
          </div>
        </aside>
        <main class="stage">
          <div class="bar">
            <div class="group"><button class="tool on" aria-label="Toggle panel"><ui-icon name="panel"></ui-icon></button></div>
            <div class="modes">
              <div class="group">
                <span class="label">Map view</span>
                <button class="tool on" aria-label="2D view"><ui-icon name="note"></ui-icon></button>
                <button class="tool" aria-label="3D view"><ui-icon name="cube"></ui-icon></button>
              </div>
              <div class="group"><button class="tool" aria-label="Split view"><ui-icon name="split"></ui-icon></button></div>
            </div>
            <div class="group end"><button class="tool" aria-label="Information"><ui-icon name="info"></ui-icon></button></div>
          </div>
          <div class="map-area">
            <base-map></base-map>
            <div class="map-tools">
              <button class="legend" aria-label="Legend"><ui-icon name="list"></ui-icon></button>
              <span>© <a href="#osm">OpenStreetMap</a> |</span>
            </div>
          </div>
        </main>
      </div>
      <div class="backdrop"><source-dialog role="dialog" aria-label="Add source to map"></source-dialog></div>
    `;
  }
}
